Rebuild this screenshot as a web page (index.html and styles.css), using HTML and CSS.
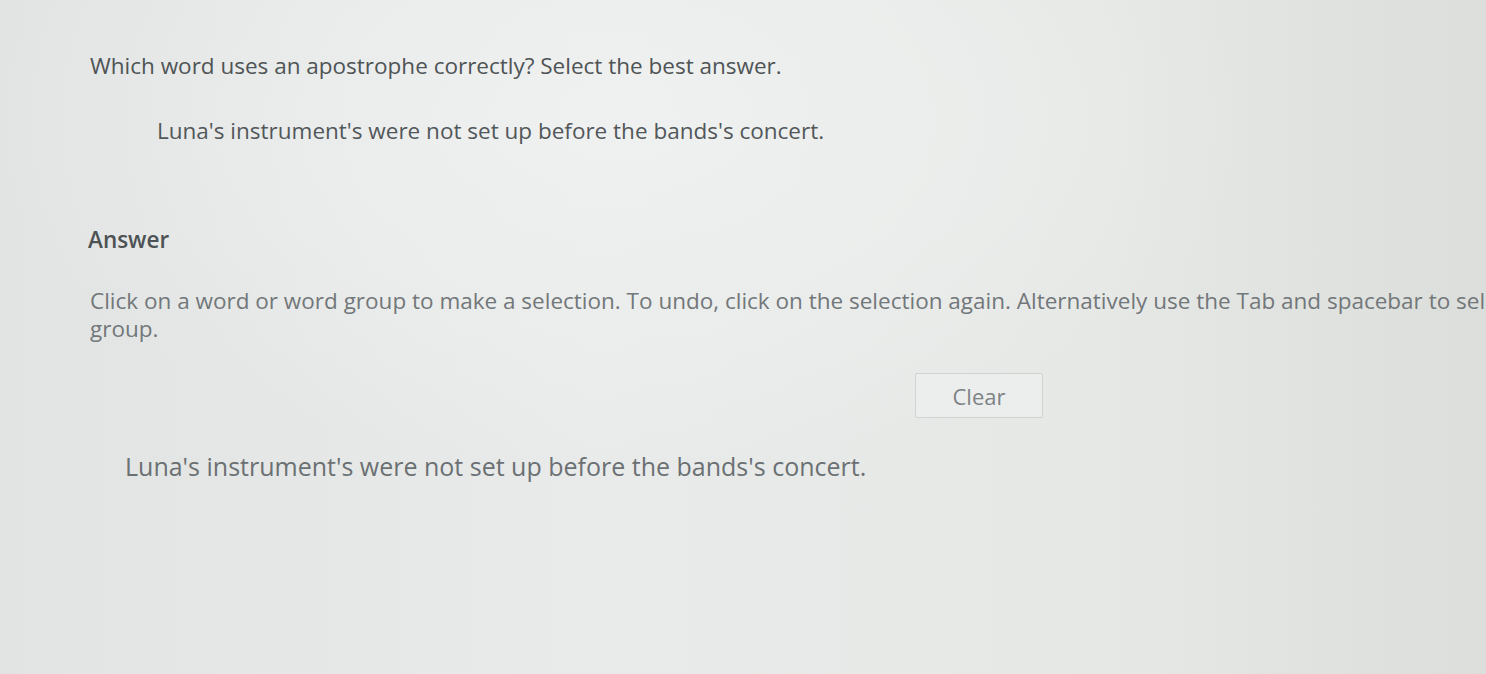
FILE: index.html
```html
<!DOCTYPE html>
<html lang="en">
<head>
<meta charset="utf-8">
<title>Question</title>
<link rel="stylesheet" href="styles.css">
</head>
<body>
<main class="page">
  <section class="question">
    <p class="prompt">Which word uses an apostrophe correctly? Select the best answer.</p>
    <p class="passage">Luna's instrument's were not set up before the bands's concert.</p>
  </section>
  <section class="answer">
    <h2 class="answer-title">Answer</h2>
    <p class="instructions">Click on a word or word group to make a selection. To undo, click on the selection again. Alternatively use the Tab and spacebar to select a word or word group.</p>
    <div class="actions">
      <button class="clear-btn" type="button">Clear</button>
    </div>
    <p class="selectable">Luna's instrument's were not set up before the bands's concert.</p>
  </section>
</main>
</body>
</html>
```
FILE: styles.css
```css
html, body {
  margin: 0;
  height: 100%;
}
body {
  overflow: hidden;
  font-family: "Open Sans", "Liberation Sans", sans-serif;
  background:
    radial-gradient(ellipse 900px 500px at 620px 120px, rgba(240,242,241,0.9), rgba(240,242,241,0) 70%),
    linear-gradient(90deg, #e1e4e2 0%, #e9ebea 40%, #e6e8e6 75%, #dcdedb 100%);
}
.page {
  width: 1740px;
  padding: 51px 0 0 90px;
  box-sizing: border-box;
}
p, h2 { margin: 0; }
.prompt {
  font-size: 22.5px;
  line-height: 30px;
  color: #4f5456;
}
.passage {
  margin-top: 35px;
  padding-left: 67px;
  font-size: 22.5px;
  line-height: 30px;
  color: #52575a;
}
.answer-title {
  margin-top: 79px;
  margin-left: -2px;
  font-size: 22.5px;
  line-height: 30px;
  font-weight: 600;
  color: #4d5254;
}
.instructions {
  margin-top: 32px;
  width: 1640px;
  font-size: 22.5px;
  line-height: 28px;
  color: #72777a;
}
.actions {
  margin-top: 30px;
  padding-left: 825px;
}
.clear-btn {
  width: 128px;
  height: 45px;
  border: 1px solid #cfd3d2;
  background: #eceeed;
  border-radius: 2px;
  font-family: inherit;
  font-size: 22px;
  color: #7d8285;
  padding: 0;
}
.selectable {
  margin-top: 31px;
  padding-left: 35px;
  font-size: 25px;
  line-height: 34px;
  color: #6b7073;
}
```
